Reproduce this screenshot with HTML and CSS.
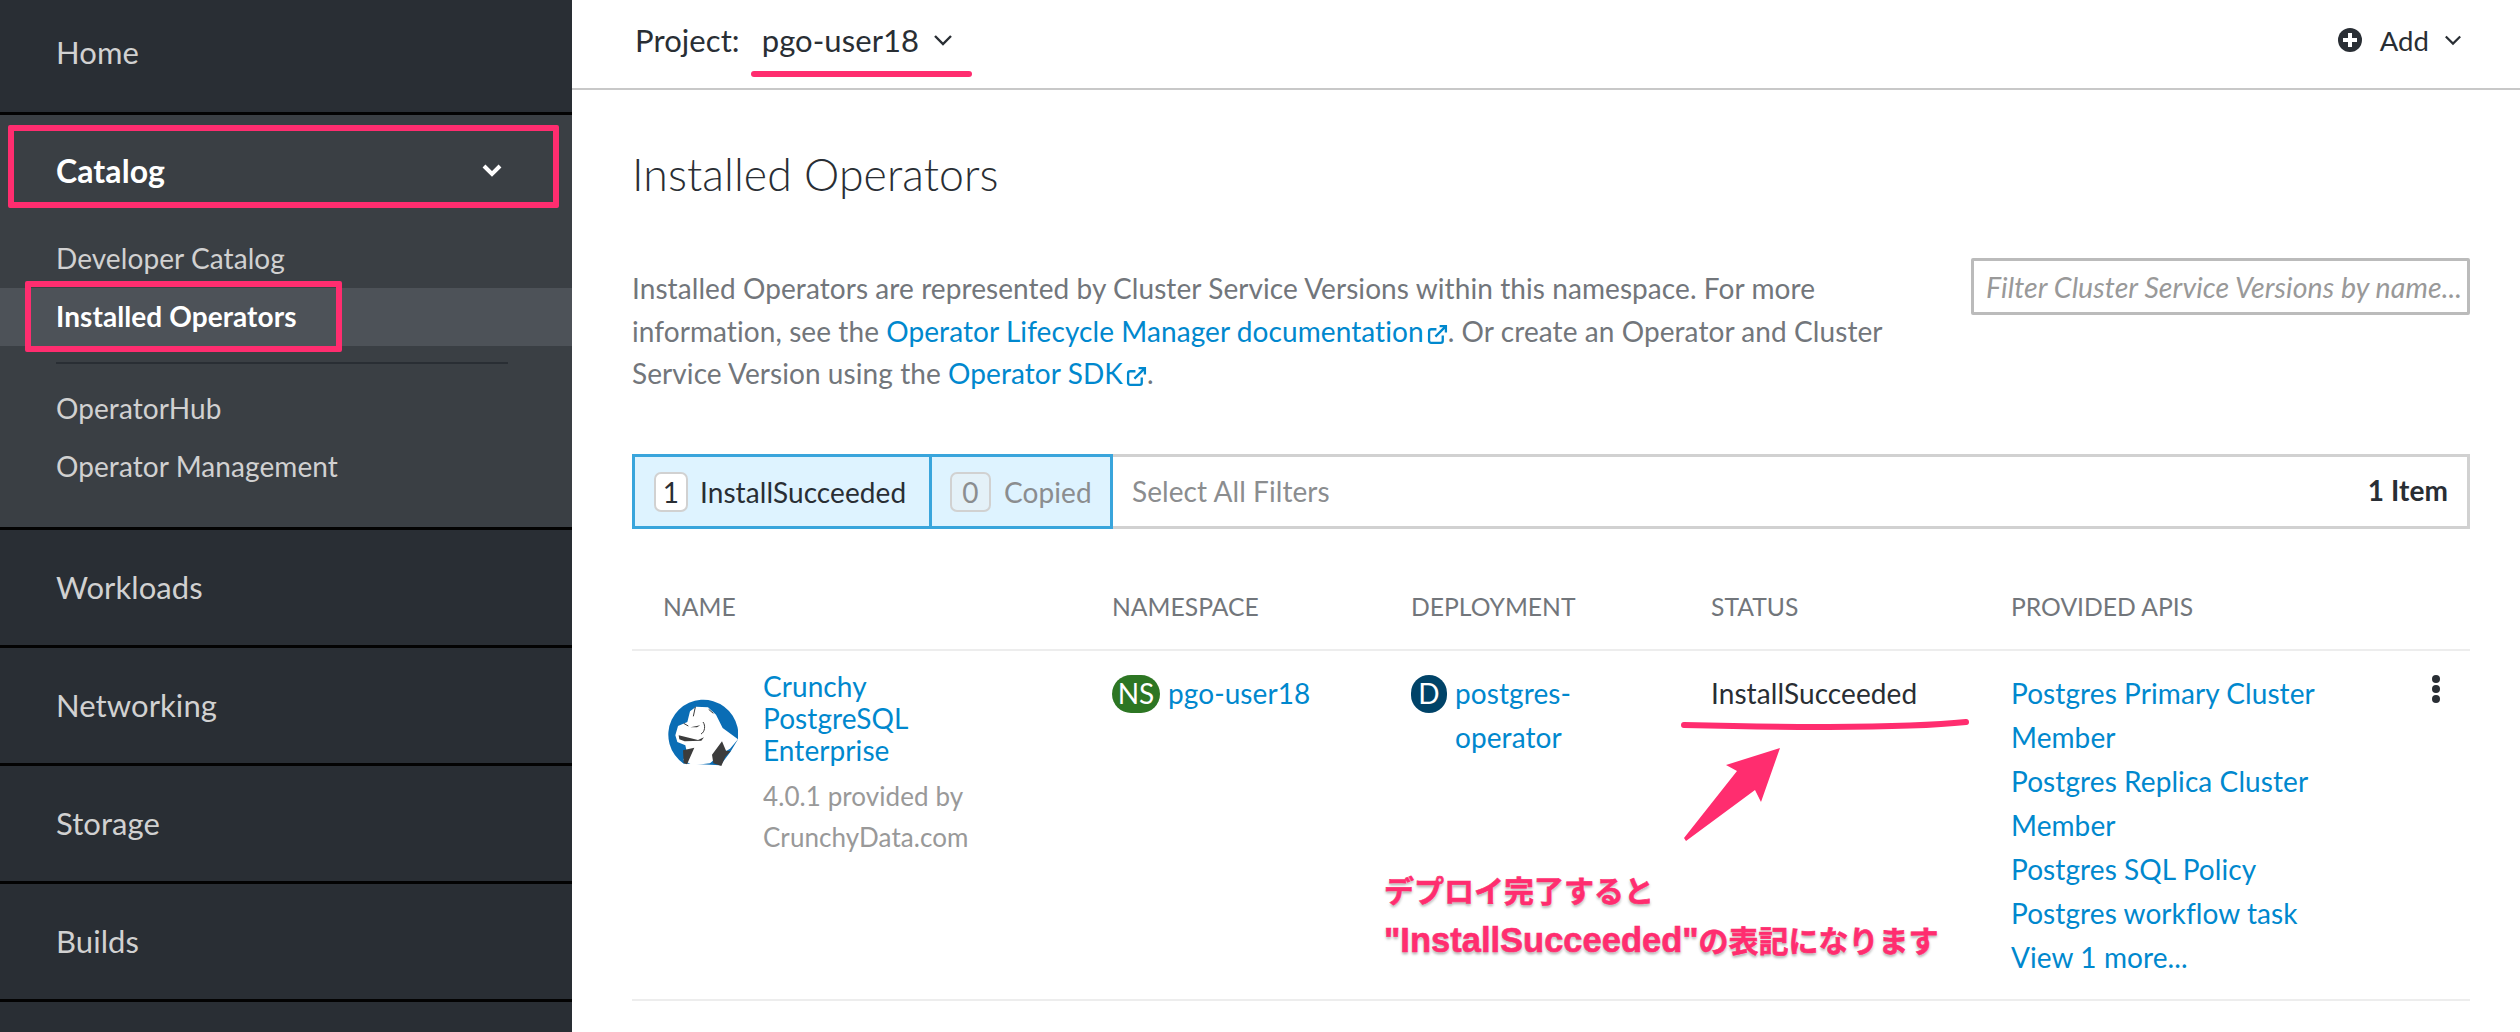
FILE: index.html
```html
<!DOCTYPE html>
<html lang="en">
<head>
    <meta charset="UTF-8">
    <meta name="viewport" content="width=device-width, initial-scale=1.0">
    <title>Installed Operators</title>
    <link rel="stylesheet" href="styles.css">
</head>
<body>
    <div class="page">
        <nav class="sidebar">
            <div class="nav-item nav-home">Home</div>
            <div class="nav-group">
                <div class="nav-head">
                    <span>Catalog</span>
                    <svg class="nav-chevron" viewBox="0 0 20 14"><polyline points="2,3 10,11 18,3"/></svg>
                </div>
                <div class="nav-sub">Developer Catalog</div>
                <div class="nav-sub active">Installed Operators</div>
                <div class="nav-divider"></div>
                <div class="nav-sub">OperatorHub</div>
                <div class="nav-sub">Operator Management</div>
            </div>
            <div class="nav-item">Workloads</div>
            <div class="nav-item">Networking</div>
            <div class="nav-item">Storage</div>
            <div class="nav-item">Builds</div>
        </nav>
        <main class="main">
            <header class="topbar">
                <div class="project">
                    <span class="project-label">Project:</span>
                    <span class="project-name">pgo-user18</span>
                    <svg class="chevron" viewBox="0 0 20 12"><polyline points="2,2 10,10 18,2"/></svg>
                </div>
                <div class="add">
                    <svg class="add-icon" viewBox="0 0 24 24"><circle cx="12" cy="12" r="12"/><path d="M10 5h4v5h5v4h-5v5h-4v-5H5v-4h5z"/></svg>
                    <span>Add</span>
                    <svg class="chevron" viewBox="0 0 20 12"><polyline points="2,2 10,10 18,2"/></svg>
                </div>
            </header>
            <section class="content">
                <h1 class="title">Installed Operators</h1>
                <div class="intro">
                    <p class="intro-text">Installed Operators are represented by Cluster Service Versions within this namespace. For more<br>information, see the <a class="link">Operator Lifecycle Manager documentation<svg class="ext" viewBox="0 0 20 20"><path d="M15 11v5a2 2 0 0 1-2 2H4a2 2 0 0 1-2-2V7a2 2 0 0 1 2-2h5"/><path d="M8 12 18 2M12 2h6v6"/></svg></a>. Or create an Operator and Cluster<br>Service Version using the <a class="link">Operator SDK<svg class="ext" viewBox="0 0 20 20"><path d="M15 11v5a2 2 0 0 1-2 2H4a2 2 0 0 1-2-2V7a2 2 0 0 1 2-2h5"/><path d="M8 12 18 2M12 2h6v6"/></svg></a>.</p>
                    <div class="filter-input">Filter Cluster Service Versions by name...</div>
                </div>
                <div class="filter-bar">
                    <div class="chip chip-on"><span class="count">1</span><span>InstallSucceeded</span></div>
                    <div class="chip chip-off"><span class="count">0</span><span>Copied</span></div>
                    <div class="select-all">Select All Filters</div>
                    <div class="item-count">1 Item</div>
                </div>
                <div class="table">
                    <div class="table-head">
                        <div>NAME</div>
                        <div>NAMESPACE</div>
                        <div>DEPLOYMENT</div>
                        <div>STATUS</div>
                        <div>PROVIDED APIS</div>
                    </div>
                    <div class="table-row">
                        <div class="cell-name">
                            <svg class="logo" viewBox="83 138 210 210">
                                <path class="logo-blue" d="M130 335A105 105 0 1 1 293 262L270 300 240 340 150 335z"/>
                                <path class="logo-white" d="M105 250l8-28 28-12 8-32 18-14 36 2 24 22 20 40 46 34-24 28-30 18-30 26-52 6-28-16 10-26-4-18-24-10z"/>
                                <path class="logo-dark" d="M215 308l30-40 12 28 14 2-16 16-12 28-24-8zM128 295l34-8-22 50-10-4zM115 250l58 14 18-8-8 10-50 2-16-6zM150 226l30-6-10 6z"/>
                                <path class="logo-line" d="M130 214l14 8M188 210c8 10 6 30-6 36M165 165l-6 28M205 172l14 12"/>
                            </svg>
                            <div>
                                <a class="link operator-name">Crunchy PostgreSQL Enterprise</a>
                                <div class="provider">4.0.1 provided by CrunchyData.com</div>
                            </div>
                        </div>
                        <div class="cell-res"><span class="badge badge-ns">NS</span><a class="link">pgo-user18</a></div>
                        <div class="cell-res"><span class="badge badge-d">D</span><a class="link dep-name">postgres-<br>operator</a></div>
                        <div class="cell-status">InstallSucceeded</div>
                        <div class="cell-apis">
                            <a class="link">Postgres Primary Cluster<br>Member</a>
                            <a class="link">Postgres Replica Cluster<br>Member</a>
                            <a class="link">Postgres SQL Policy</a>
                            <a class="link">Postgres workflow task</a>
                            <a class="link">View 1 more...</a>
                        </div>
                        <div class="kebab"><i></i><i></i><i></i></div>
                    </div>
                </div>
            </section>
        </main>

        <!-- hand drawn marks on top of the screenshot -->
        <div class="mark mark-catalog"></div>
        <div class="mark mark-installed"></div>
        <div class="stroke stroke-project"></div>
        <svg class="arrow" viewBox="1670 715 310 135">
            <path d="M1684 838 1737 771 1726 765 1780 748 1761 802 1755 790 1686 841z"/>
            <path class="arrow-line" d="M1684 725C1760 727 1900 729 1966 722"/>
        </svg>
        <div class="note">デプロイ完了すると<br><b>"InstallSucceeded"</b>の表記になります</div>
    </div>
</body>
</html>
```

FILE: styles.css
```css
* {
    margin: 0;
    padding: 0;
    box-sizing: border-box;
}
html, body {
    width: 2520px;
    height: 1032px;
    overflow: hidden;
    background: #fff;
}
.page {
    position: relative;
    display: flex;
    width: 2520px;
    height: 1032px;
    overflow: hidden;
    font-family: Lato, "Noto Sans", sans-serif;
    font-size: 28px;
    letter-spacing: 0.08px;
    color: #292e34;
}

/* sidebar */
.sidebar {
    width: 572px;
    flex-shrink: 0;
    background: #292e34;
    display: flex;
    flex-direction: column;
    color: #d1d1d1;
    font-size: 31px;
}
.nav-item {
    height: 118px;
    display: flex;
    align-items: center;
    padding-left: 56px;
    padding-bottom: 2px;
    border-bottom: 3px solid #030303;
    flex-shrink: 0;
}
.nav-home {
    height: 115px;
    padding-bottom: 8px;
}
.nav-group {
    height: 415px;
    flex-shrink: 0;
    background: #3a3f44;
    border-bottom: 3px solid #030303;
    font-size: 28px;
}
.nav-head {
    height: 115px;
    display: flex;
    align-items: center;
    justify-content: space-between;
    padding: 0 70px 5px 56px;
    color: #fff;
    font-size: 32px;
    font-weight: 700;
}
.nav-chevron {
    width: 20px;
    height: 14px;
    fill: none;
    stroke: #fff;
    stroke-width: 4;
}
.nav-sub {
    height: 58px;
    line-height: 56px;
    padding-left: 56px;
}
.nav-sub.active {
    background: #4d5258;
    color: #fff;
    font-weight: 700;
}
.nav-divider {
    height: 2px;
    margin: 16px 64px 16px 56px;
    background: #292e34;
}

/* top bar */
.main {
    flex: 1;
    min-width: 0;
}
.topbar {
    height: 90px;
    border-bottom: 2px solid #c8c8c8;
    display: flex;
    align-items: center;
    justify-content: space-between;
    padding: 0 58px 8px 63px;
    font-size: 31px;
}
.project, .add {
    display: flex;
    align-items: center;
}
.project-name {
    margin-left: 22px;
    margin-right: 14px;
}
.chevron {
    width: 20px;
    height: 12px;
    fill: none;
    stroke: #292e34;
    stroke-width: 2.4;
}
.add {
    font-size: 27.5px;
}
.add-icon {
    width: 24px;
    height: 24px;
    margin-right: 18px;
}
.add-icon circle {
    fill: #292e34;
}
.add-icon path {
    fill: #fff;
}
.add .chevron {
    width: 18px;
    margin-left: 15px;
}

/* content */
.content {
    padding: 0 50px 0 60px;
}
.title {
    font-size: 44.6px;
    font-weight: 300;
    line-height: 60px;
    margin-top: 54px;
}
.intro {
    display: flex;
    justify-content: space-between;
    align-items: flex-start;
    margin-top: 54px;
    height: 196px;
}
.intro-text {
    margin-top: 9px;
    line-height: 42.6px;
    color: #72767b;
    white-space: nowrap;
}
.link {
    color: #0088ce;
    text-decoration: none;
}
.ext {
    width: 21px;
    height: 21px;
    margin-left: 3px;
    fill: none;
    stroke: #0088ce;
    stroke-width: 2.2;
    vertical-align: -3px;
}
.filter-input {
    width: 499px;
    height: 57px;
    border: 3px solid #bbb;
    border-radius: 2px;
    padding-left: 12px;
    line-height: 53px;
    font-size: 28.5px;
    font-style: italic;
    color: #999;
    overflow: hidden;
    white-space: nowrap;
}

/* filter bar */
.filter-bar {
    display: flex;
    align-items: stretch;
    height: 75px;
    border: 3px solid #d1d1d1;
    border-left: 0;
}
.chip {
    display: flex;
    align-items: center;
    margin: -3px 0;
    background: #def3ff;
    border: 3px solid #39a5dc;
    padding-left: 19px;
}
.chip-on {
    width: 300px;
}
.chip-off {
    width: 184px;
    margin-left: -3px;
    color: #8b8d8f;
    padding-left: 18px;
}
.count {
    display: block;
    width: 34px;
    height: 40px;
    line-height: 36px;
    margin-right: 12px;
    text-align: center;
    border: 2px solid #d1d1d1;
    border-radius: 7px;
    background: #fff;
}
.chip-off .count {
    background: #e4f1f8;
    width: 41px;
    margin-right: 13px;
}
.select-all {
    flex: 1;
    align-self: center;
    margin-left: 19px;
    margin-top: -2px;
    color: #8b8d8f;
}
.item-count {
    align-self: center;
    margin-right: 19px;
    margin-top: -4px;
    font-weight: 700;
}

/* table */
.table-head, .table-row {
    display: grid;
    grid-template-columns: 449px 299px 300px 300px 1fr;
    padding-left: 31px;
    border-bottom: 2px solid #ededed;
}
.table-head {
    margin-top: 0;
    height: 122px;
    padding-top: 62px;
    font-size: 24.7px;
    letter-spacing: 0;
    line-height: 32px;
    color: #72767b;
}
.table-row {
    position: relative;
    height: 350px;
    padding-top: 20px;
    line-height: 44px;
}
.cell-name {
    display: flex;
    align-items: flex-start;
}
.logo {
    width: 70px;
    height: 70px;
    margin: 27px 25px 0 5px;
    flex-shrink: 0;
}
.logo-blue {
    fill: #0a6db5;
}
.logo-white {
    fill: #fff;
}
.logo-dark {
    fill: #3c3c3c;
}
.logo-line {
    fill: none;
    stroke: #3c3c3c;
    stroke-width: 3;
}
.operator-name {
    display: block;
    width: 200px;
    line-height: 32px;
    margin-top: -1px;
}
.provider {
    width: 260px;
    margin-top: 10px;
    line-height: 41px;
    font-size: 26px;
    color: #999;
}
.cell-res {
    display: flex;
    align-items: flex-start;
}
.badge {
    display: block;
    height: 38px;
    line-height: 36px;
    text-align: center;
    color: #fff;
    border-radius: 19px;
    flex-shrink: 0;
    margin-top: 4px;
    margin-right: 8px;
}
.badge-ns {
    width: 48px;
    background: #2d7623;
}
.badge-d {
    width: 36px;
    background: #004368;
}
.cell-apis .link {
    display: block;
}
.kebab {
    position: absolute;
    top: 24px;
    right: 30px;
    display: flex;
    flex-direction: column;
    gap: 2px;
}
.kebab i {
    display: block;
    width: 8px;
    height: 8px;
    border-radius: 50%;
    background: #292e34;
}

/* annotation overlay */
.mark {
    position: absolute;
    border: 6px solid #ff2d6f;
    border-radius: 2px;
}
.mark-catalog {
    left: 8px;
    top: 125px;
    width: 551px;
    height: 83px;
}
.mark-installed {
    left: 25px;
    top: 281px;
    width: 317px;
    height: 71px;
}
.stroke {
    position: absolute;
    background: #ff2d6f;
    border-radius: 3px;
}
.stroke-project {
    left: 751px;
    top: 71px;
    width: 221px;
    height: 6px;
}
.arrow {
    position: absolute;
    left: 1670px;
    top: 715px;
    width: 310px;
    height: 135px;
    overflow: visible;
}
.arrow path {
    fill: #ff2d6f;
}
.arrow .arrow-line {
    fill: none;
    stroke: #ff2d6f;
    stroke-width: 6;
    stroke-linecap: round;
}
.note {
    position: absolute;
    left: 1384px;
    top: 868px;
    font-family: "Liberation Sans", "Noto Sans CJK JP", sans-serif;
    font-size: 30px;
    font-weight: 700;
    line-height: 48px;
    letter-spacing: 0;
    color: #ff2d6f;
    white-space: nowrap;
    -webkit-text-stroke: 0.6px #ff2d6f;
    text-shadow: 0 0 3px #fff, 0 2px 3px rgba(0,0,0,0.4);
}
.note b {
    font-size: 34.5px;
}
```
